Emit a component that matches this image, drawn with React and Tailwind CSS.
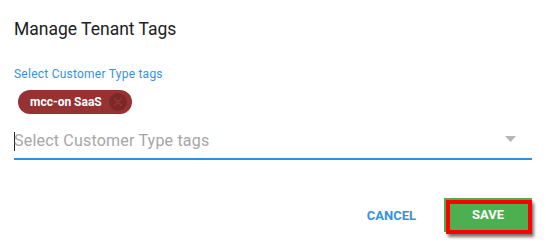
import React from "react";

function TagChip({ label }) {
    return (
        <div className="ml-[4px] inline-flex h-[24px] items-center rounded-full bg-[#963232] pl-[12px] pr-[5px]">
            <span className="text-[12px] font-bold leading-none text-white">{label}</span>
            <span className="ml-[7px] flex h-[18px] w-[18px] items-center justify-center rounded-full bg-[#7b2828]">
                <svg width="10" height="10" viewBox="0 0 10 10">
                    <path d="M2 2 L8 8 M8 2 L2 8" stroke="#963232" strokeWidth="1.8" strokeLinecap="round" />
                </svg>
            </span>
        </div>
    );
}

export default function App() {
    return (
        <div className="h-[248px] w-[546px] bg-white px-[14px] pt-[17px] font-['Roboto',sans-serif]">
            <h2 className="text-[17.5px] font-normal leading-[24px] text-[#212121]">Manage Tenant Tags</h2>

            <div className="mt-[25px] text-[12px] leading-[16px] tracking-[0.24px] text-[#3592e0]">Select Customer Type tags</div>

            <div className="mt-[7px]">
                <TagChip label="mcc-on SaaS" />
            </div>

            <div className="mt-[17px] flex w-full items-center border-b-2 border-[#2f8fdc] pb-[7px]">
                <div className="flex h-[20px] flex-1 items-center">
                    <span className="h-[19px] w-px bg-[#222]" />
                    <span className="-ml-px text-[16px] leading-[20px] tracking-[0.2px] text-[#a6a6a6]">Select Customer Type tags</span>
                </div>
                <svg width="11" height="6" viewBox="0 0 11 6" className="mr-[16px] mb-[4px]">
                    <polygon points="0,0 11,0 5.5,6" fill="#b5b5b5" />
                </svg>
            </div>

            <div className="mt-[38px] flex items-center justify-end">
                <button className="text-[13px] font-bold leading-none text-[#3592e0]">CANCEL</button>
                <div className="relative ml-[28px]">
                    <button className="h-[34px] w-[88px] bg-[#4caf50] text-[13px] font-bold text-white">SAVE</button>
                    <div className="absolute left-[2px] top-[2px] h-[34px] w-[86px] border-4 border-[#ff0000] shadow-[2px_3px_3px_rgba(0,0,0,0.55)]" />
                </div>
            </div>
        </div>
    );
}
